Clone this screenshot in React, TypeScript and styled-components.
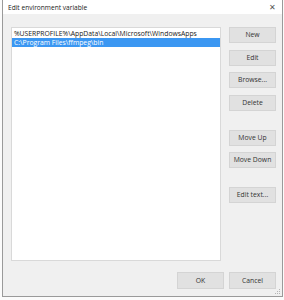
import styled, { createGlobalStyle } from "styled-components";

const GlobalStyle = createGlobalStyle`
    html, body {
        margin: 0;
        padding: 0;
        background: #fbfbfb;
    }
    body {
        font-family: "Open Sans", "Noto Sans", "Liberation Sans", sans-serif;
    }
`;

const Screen = styled.div`
    width: 284px;
    height: 300px;
    padding: 0 1px 3px 2px;
    box-sizing: border-box;
    display: flex;
`;

const Dialog = styled.div`
    flex: 1;
    display: flex;
    flex-direction: column;
    background: #f0f0f0;
    border: 1px solid #9a9a9a;
    border-top: none;
    position: relative;
`;

const TitleBar = styled.div`
    height: 14px;
    background: #ffffff;
    display: flex;
    align-items: center;
    justify-content: space-between;
    padding: 0 6px 0 5px;
    font-size: 6.6px;
    color: #1a1a1a;
`;

const Close = styled.span`
    font-size: 8px;
    color: #555;
    line-height: 1;
`;

const Body = styled.div`
    flex: 1;
    display: grid;
    grid-template-columns: 210px 47px;
    grid-template-rows: 234px 1fr;
    column-gap: 8px;
    padding: 13px 6px 0 8px;
`;

const List = styled.ul`
    margin: 0;
    padding: 1px 0 0;
    list-style: none;
    background: #ffffff;
    border: 1px solid #d9d9d9;
    box-sizing: border-box;
`;

const Row = styled.li<{ $selected?: boolean }>`
    height: 9px;
    line-height: 9px;
    padding-left: 2px;
    font-size: 6.8px;
    white-space: nowrap;
    overflow: hidden;
    color: ${p => (p.$selected ? "#ffffff" : "#1a1a1a")};
    background: ${p => (p.$selected ? "#3b97f2" : "transparent")};
`;

const Side = styled.div`
    display: flex;
    flex-direction: column;
    gap: 6.5px;
`;

const Button = styled.button<{ $gapTop?: number }>`
    box-sizing: border-box;
    height: 16px;
    padding: 0;
    line-height: 14px;
    margin: ${p => p.$gapTop ?? 0}px 0 0;
    background: #e1e1e1;
    border: 1px solid #d4d4d4;
    font-family: inherit;
    font-size: 6.8px;
    color: #333;
`;

const Footer = styled.div`
    grid-column: 1 / span 2;
    display: flex;
    justify-content: flex-end;
    gap: 5px;
    padding-top: 11px;
`;

const FooterButton = styled(Button)`
    width: 47px;
    height: 17px;
`;

const Grip = styled.svg`
    position: absolute;
    right: 1px;
    bottom: 1px;
`;

const paths = [
    "%USERPROFILE%\\AppData\\Local\\Microsoft\\WindowsApps",
    "C:\\Program Files\\ffmpeg\\bin",
];

const App = () => {
    return (
        <Screen>
            <GlobalStyle />
            <Dialog>
                <TitleBar>
                    <span>Edit environment variable</span>
                    <Close>✕</Close>
                </TitleBar>
                <Body>
                    <List>
                        {paths.map((p, i) => (
                            <Row key={p} $selected={i === 1}>{p}</Row>
                        ))}
                    </List>
                    <Side>
                        <Button>New</Button>
                        <Button>Edit</Button>
                        <Button>Browse...</Button>
                        <Button>Delete</Button>
                        <Button $gapTop={12.5}>Move Up</Button>
                        <Button>Move Down</Button>
                        <Button $gapTop={12.5}>Edit text...</Button>
                    </Side>
                    <Footer>
                        <FooterButton>OK</FooterButton>
                        <FooterButton>Cancel</FooterButton>
                    </Footer>
                </Body>
                <Grip width="6" height="6" viewBox="0 0 6 6">
                    <rect x="4" y="0" width="1" height="1" fill="#b5b5b5" />
                    <rect x="2" y="2" width="1" height="1" fill="#b5b5b5" />
                    <rect x="4" y="2" width="1" height="1" fill="#b5b5b5" />
                    <rect x="0" y="4" width="1" height="1" fill="#b5b5b5" />
                    <rect x="2" y="4" width="1" height="1" fill="#b5b5b5" />
                    <rect x="4" y="4" width="1" height="1" fill="#b5b5b5" />
                </Grip>
            </Dialog>
        </Screen>
    );
};

export default App;
